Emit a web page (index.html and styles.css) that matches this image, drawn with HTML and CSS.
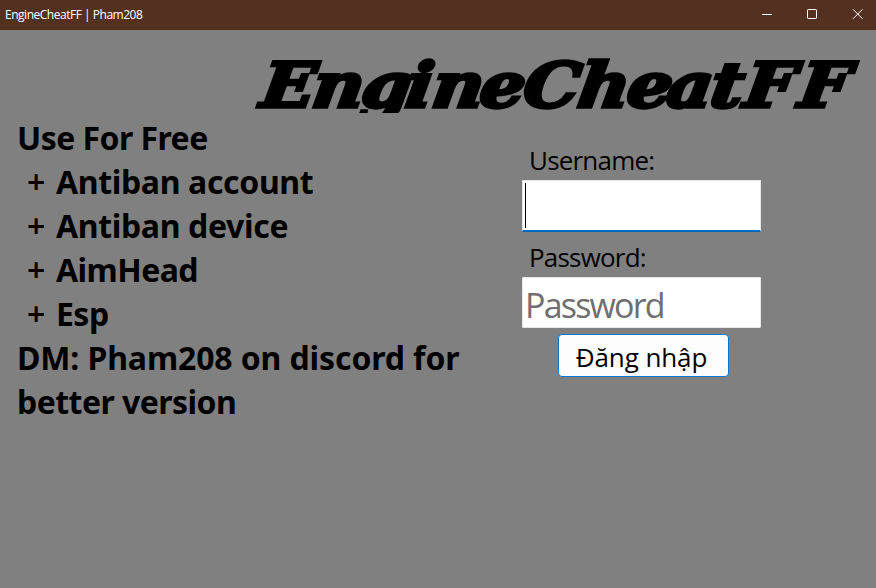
FILE: index.html
```html
<!DOCTYPE html>
<html lang="vi">
<head>
<meta charset="utf-8">
<title>EngineCheatFF | Pham208</title>
<link rel="stylesheet" href="styles.css">
</head>
<body>
<div class="window">
  <header class="titlebar">
    <span class="caption">EngineCheatFF | Pham208</span>
    <div class="controls">
      <svg viewBox="0 0 46 30"><path d="M17 14.500h10"/></svg>
      <svg viewBox="0 0 46 30"><rect x="16.5" y="9.5" width="9" height="9" rx=".7"/></svg>
      <svg viewBox="0 0 46 30"><path d="M16 9.300l9.500 9.500M25.500 9.300l-9.500 9.500"/></svg>
    </div>
  </header>
  <svg class="logo" viewBox="0 0 620 60"><text transform="translate(0 53.500) skewX(-8) scale(1.14 1)" x="7 52 95 134 157 199 237 285 328 363 401 431 479" y="0">EngineCheatFF</text></svg>
  <main class="content">
    <section class="notes">
      <div class="tight">Use For Free</div>
      <div class="item"><span class="plus">+</span>Antiban account</div>
      <div class="item"><span class="plus">+</span>Antiban device</div>
      <div class="item tight"><span class="plus">+</span>AimHead</div>
      <div class="item tight"><span class="plus">+</span>Esp</div>
      <div class="contact">DM: Pham208 on discord for</div>
      <div class="tight">better version</div>
    </section>
    <form class="login">
      <label>Username:</label>
      <div class="field focused"><span class="caret"></span></div>
      <label>Password:</label>
      <div class="field"><span class="placeholder">Password</span></div>
      <button type="button">Đăng nhập</button>
    </form>
  </main>
</div>
</body>
</html>
```
FILE: styles.css
```css
* { box-sizing: border-box; }
body { margin: 0; }
.window { width: 876px; height: 588px; overflow: hidden; background: #808080; color: #000; font-family: "Open Sans", "Noto Sans", sans-serif; }
.titlebar { height: 30px; display: flex; align-items: center; justify-content: space-between; padding: 0 0 1px 5px; background: #543021; color: #fff; }
.caption { font-size: 12px; letter-spacing: -0.48px; white-space: nowrap; }
.controls { display: flex; margin: 0 -7px -1px 0; }
.controls svg { width: 46px; height: 30px; fill: none; stroke: #fff; stroke-width: 1; }
.logo { display: block; width: 620px; height: 60px; margin: 23px 0 0 251px; overflow: hidden; }
.logo text { font: italic bold 62px "DejaVu Serif", serif; fill: #000; stroke: #000; stroke-width: 3.5px; }
.content { display: flex; }
.notes { width: 522px; padding: 3px 0 0 17px; font-size: 32px; line-height: 44px; font-weight: 700; font-family: "Noto Sans", sans-serif; letter-spacing: -0.35px; white-space: nowrap; }
.tight { letter-spacing: -0.55px; }
.contact { letter-spacing: -0.12px; }
.item { display: flex; padding-left: 10px; }
.plus { width: 29px; font-weight: 600; }
.login { width: 239px; padding-top: 27px; display: flex; flex-direction: column; }
.login label { height: 40px; padding-left: 7px; line-height: 40px; font-size: 26px; letter-spacing: -0.8px; white-space: nowrap; }
.field { height: 51px; background: #fff; border: 1px solid #e8e8e8; border-radius: 1px; padding: 0 2px; display: flex; align-items: center; }
.focused { height: 52px; border-bottom: 2px solid #0067c0; margin-bottom: 5px; padding: 2px; align-items: stretch; }
.caret { width: 1px; background: #000; }
.placeholder { padding-top: 4px; font-size: 34px; line-height: 46px; letter-spacing: -1.8px; color: #6f6f6f; }
.login button { width: 171px; height: 43px; margin: 6px 0 0 36px; padding: 3px 4px 0 0; border: 1px solid #0078d4; border-radius: 4px; background: #fdfdfd; color: #000; font: 26px/38px "Open Sans", "Noto Sans", sans-serif; letter-spacing: -0.1px; white-space: nowrap; }
```
